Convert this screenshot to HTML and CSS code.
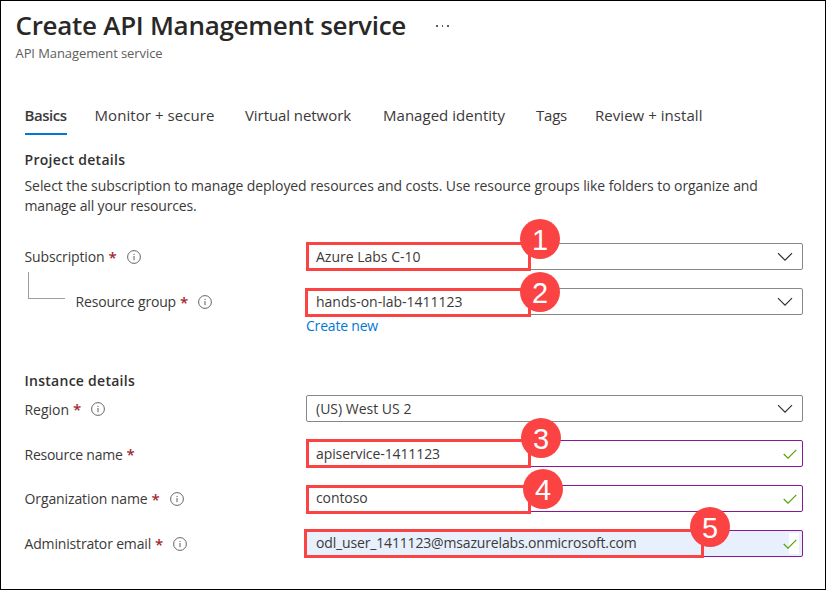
FILE: index.html
```html
<!DOCTYPE html>
<html lang="en">
<head>
<meta charset="utf-8">
<title>Create API Management service</title>
<link rel="stylesheet" href="styles.css">
</head>
<body>
<svg class="defs" width="0" height="0" aria-hidden="true">
  <symbol id="info" viewBox="0 0 14 14"><circle cx="7" cy="7" r="6.4" fill="none" stroke="#605e5c" stroke-width=".95"/><path d="M7 6v4.2M7 3.9v1.1" fill="none" stroke="#605e5c" stroke-width="1"/></symbol>
  <symbol id="chevron" viewBox="0 0 16 10"><path d="M1 1.2l7 7 7-7" fill="none" stroke="#323130" stroke-width="1.2"/></symbol>
  <symbol id="check" viewBox="0 0 14 10"><path d="M.7 5l4.3 4.1L13.3.8" fill="none" stroke="#57a300" stroke-width="1.2"/></symbol>
</svg>
<main class="page">
  <header class="header">
    <div class="title-row"><h1>Create API Management service</h1><span class="more"><i></i><i></i><i></i></span></div>
    <p class="subtitle">API Management service</p>
  </header>
  <nav class="tabs">
    <a class="tab active">Basics</a>
    <a class="tab monitor">Monitor + secure</a>
    <a class="tab network">Virtual network</a>
    <a class="tab identity">Managed identity</a>
    <a class="tab tags">Tags</a>
    <a class="tab review">Review + install</a>
  </nav>
  <section class="project">
    <h2>Project details</h2>
    <p class="description">Select the subscription to manage deployed resources and costs. Use resource groups like folders to organize and<br><span class="line-end">manage all your resources.</span></p>
    <div class="rows">
      <div class="row">
        <label class="label subscription"><span>Subscription</span><b>*</b><svg class="info"><use href="#info"/></svg></label>
        <div class="field"><span class="value">Azure Labs C-10</span><svg class="chevron"><use href="#chevron"/></svg>
          <div class="mark mark-1"></div><div class="badge badge-1">1</div></div>
      </div>
      <div class="row">
        <label class="label group"><i class="elbow"></i><span>Resource group</span><b>*</b><svg class="info"><use href="#info"/></svg></label>
        <div class="field"><span class="value">hands-on-lab-1411123</span><svg class="chevron"><use href="#chevron"/></svg>
          <div class="mark mark-2"></div><div class="badge badge-2">2</div></div>
      </div>
    </div>
    <a class="create">Create new</a>
  </section>
  <section class="instance">
    <h2>Instance details</h2>
    <div class="rows">
      <div class="row">
        <label class="label region"><span>Region</span><b>*</b><svg class="info"><use href="#info"/></svg></label>
        <div class="field"><span class="value">(US) West US 2</span><svg class="chevron"><use href="#chevron"/></svg></div>
      </div>
      <div class="row">
        <label class="label resource"><span>Resource name</span><b>*</b></label>
        <div class="field edited"><span class="value tight">apiservice-1411123</span><svg class="check"><use href="#check"/></svg>
          <div class="mark mark-3"></div><div class="badge badge-3">3</div></div>
      </div>
      <div class="row">
        <label class="label organization"><span>Organization name</span><b>*</b><svg class="info"><use href="#info"/></svg></label>
        <div class="field edited raised"><span class="value tight">contoso</span><svg class="check"><use href="#check"/></svg>
          <div class="mark mark-4"></div><div class="badge badge-4">4</div></div>
      </div>
      <div class="row">
        <label class="label admin"><span>Administrator email</span><b>*</b><svg class="info"><use href="#info"/></svg></label>
        <div class="field edited autofill raised"><span class="value email">odl_user_1411123@msazurelabs.onmicrosoft.com</span><span class="check-bg"></span><svg class="check"><use href="#check"/></svg>
          <div class="mark mark-5"></div><div class="badge badge-5">5</div></div>
      </div>
    </div>
  </section>
</main>
</body>
</html>
```
FILE: styles.css
```css
* { box-sizing: border-box; }
body { margin: 0; font: 14px/20px "Open Sans", sans-serif; color: #3b3a39; background: #fff; }
h1, h2, p { margin: 0; }
.defs { position: absolute; }
.page { width: 826px; height: 590px; border: 1px solid #000; padding: 8px 22px 0 23.5px; overflow: hidden; }

.header { margin-left: -9px; }
.title-row { display: flex; align-items: center; gap: 30px; height: 32px; }
h1 { font-size: 26px; line-height: 32px; font-weight: 600; letter-spacing: -.29px; color: #292827; white-space: nowrap; }
.more { display: flex; gap: 4px; padding-top: 2px; }
.more i { width: 1.5px; height: 1.5px; background: #605e5c; }
.subtitle { margin-top: 3px; font-size: 13px; line-height: 18px; letter-spacing: -.089px; color: #605e5c; }

.tabs { display: grid; grid-template-columns: 70px 150.5px 138px 153px 59px auto; margin-top: 43px; font-size: 15px; white-space: nowrap; }
.tab { height: 30px; justify-self: start; }
.active { width: 42.5px; font-weight: 600; letter-spacing: -.471px; border-bottom: 2px solid #0078d4; }
.monitor { letter-spacing: .07px; }
.network { letter-spacing: -.07px; }
.identity { letter-spacing: .026px; }
.tags { letter-spacing: -.222px; }
.review { letter-spacing: .046px; }

h2 { font-size: 14px; line-height: 20px; font-weight: 600; letter-spacing: .3px; color: #323130; }
.project { margin-top: 15px; }
.description { margin-top: 6px; letter-spacing: -.073px; white-space: nowrap; }
.line-end { letter-spacing: -.15px; }
.rows { display: grid; gap: 18px; }
.project .rows { margin-top: 27px; }
.row { display: grid; grid-template-columns: 281.5px 497px; height: 27px; }
.label { display: flex; align-items: center; white-space: nowrap; }
.label b { width: 7px; margin-left: 4px; font-size: 15px; font-weight: 600; color: #a4262c; }
.info { width: 14px; height: 14px; margin-left: 11px; }
.elbow { width: 37px; height: 27px; margin: -33px 10.5px 0 3.5px; border: solid #a19f9d; border-width: 0 0 1px 1px; }
.subscription { letter-spacing: -.13px; }
.group { letter-spacing: -.179px; }
.region { letter-spacing: -.024px; }
.resource { letter-spacing: -.253px; }
.organization { letter-spacing: -.107px; }
.admin { letter-spacing: -.165px; }

.field { position: relative; display: flex; align-items: center; justify-content: space-between; border: 1px solid #8a8886; border-radius: 2px; padding: 0 9px; white-space: nowrap; }
.edited { border-color: #881798; padding-right: 5.5px; }
.autofill { background: #e8f0fe; }
.raised .value { padding-bottom: 2px; }
.tight { letter-spacing: -.1px; }
.email { letter-spacing: -.159px; }
.chevron { width: 16px; height: 10px; }
.check { position: relative; width: 14px; height: 10px; }
.check-bg { position: absolute; top: 2px; right: 3px; width: 10px; height: 21px; background: #fff; }
.create { display: block; width: max-content; margin: 1px 0 0 281.5px; letter-spacing: -.196px; color: #0078d4; }

.instance { margin-top: 35px; }
.instance h2 { letter-spacing: .266px; }
.instance .rows { margin-top: 4px; }
.region span, .resource span { padding-top: 2px; }

.mark { position: absolute; top: -2px; left: -1px; width: 225px; height: 29px; border: 3px solid #fc4343; }
.mark-2 { top: -1px; left: -2px; width: 226px; }
.mark-4 { top: -1px; }
.mark-5 { left: -3px; width: 400px; }
.badge { position: absolute; width: 40px; height: 40px; border-radius: 50%; background: #fc4343; color: #fff; font: 29px/42px "Liberation Sans", sans-serif; text-align: center; }
.badge-1 { left: 213px; top: -25px; }
.badge-2 { left: 213px; top: -17px; }
.badge-3 { left: 214px; top: -23px; }
.badge-4 { left: 216px; top: -17px; }
.badge-5 { left: 383px; top: -24px; }
```
